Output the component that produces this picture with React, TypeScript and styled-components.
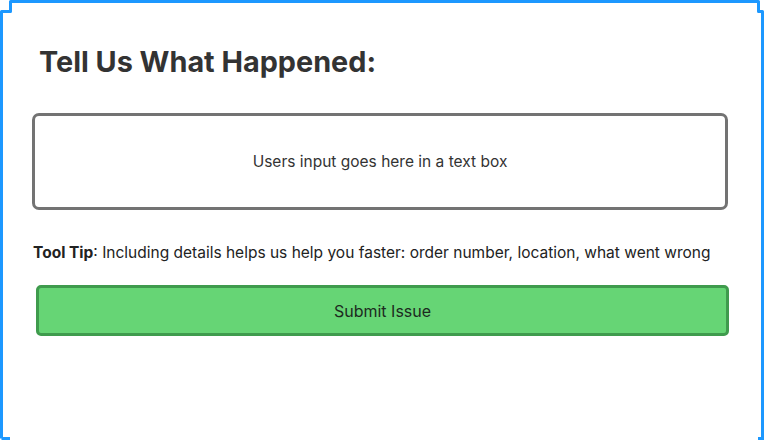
import React from "react";
import styled, { createGlobalStyle } from "styled-components";

const GlobalStyle = createGlobalStyle`
  html, body {
    margin: 0;
    padding: 0;
    background: #ffffff;
  }
  body {
    font-family: Inter, "Noto Sans", sans-serif;
    color: #333333;
  }
`;

const Frame: React.FC = () => (
  <FrameSvg width="764" height="440" viewBox="0 0 764 440">
    <path
      d="M1.5 438.5 V11.5 H10.5 V1.5 H758.5 V11.5 H762.5 V436"
      fill="none"
      stroke="#1c98ff"
      strokeWidth="3"
      strokeLinejoin="round"
    />
    <path d="M1.5 438.5 H10" fill="none" stroke="#1c98ff" strokeWidth="3" />
    <path d="M758 438.5 H762.5 V435" fill="none" stroke="#1c98ff" strokeWidth="3" />
  </FrameSvg>
);

const App: React.FC = () => {
  const [text, setText] = React.useState("");

  return (
    <Page>
      <GlobalStyle />
      <Frame />
      <Content>
        <Title>Tell Us What Happened:</Title>
        <InputBox
          placeholder="Users input goes here in a text box"
          value={text}
          onChange={({ target }) => setText(target.value)}
        />
        <Tip>
          <strong>Tool Tip</strong>: Including details helps us help you faster: order number,
          location, what went wrong
        </Tip>
        <SubmitButton type="button">Submit Issue</SubmitButton>
      </Content>
    </Page>
  );
};

export default App;

const Page = styled.div`
  position: relative;
  width: 764px;
  height: 440px;
  overflow: hidden;
`;

const FrameSvg = styled.svg`
  position: absolute;
  left: 0;
  top: 0;
  pointer-events: none;
`;

const Content = styled.main`
  display: flex;
  flex-direction: column;
  padding: 44px 36px 0 32px;
`;

const Title = styled.h1`
  margin: 0 0 0 7px;
  font-size: 28.8px;
  line-height: 36px;
  font-weight: 700;
  color: #333333;
`;

const InputBox = styled.textarea`
  margin-top: 33px;
  box-sizing: border-box;
  width: 696px;
  height: 97px;
  border: 3px solid #737373;
  border-radius: 7px;
  padding: 36px 16px 0;
  resize: none;
  font-family: Inter, "Noto Sans", sans-serif;
  font-size: 15.5px;
  line-height: 20px;
  text-align: center;
  color: #333333;
  background: #ffffff;

  &::placeholder {
    color: #333333;
  }

  &:focus-visible {
    outline: none;
  }
`;

const Tip = styled.p`
  margin: 33px 0 0 1px;
  font-size: 15.5px;
  line-height: 20px;
  color: #222222;

  strong {
    font-weight: 700;
  }
`;

const SubmitButton = styled.button`
  margin: 22px 0 0 4px;
  box-sizing: border-box;
  width: 693px;
  height: 51px;
  background: #66d575;
  border: 3px solid #3f9b4d;
  border-radius: 5px;
  font-family: Inter, "Noto Sans", sans-serif;
  font-size: 16px;
  color: #1d2b1f;
  cursor: pointer;
`;
